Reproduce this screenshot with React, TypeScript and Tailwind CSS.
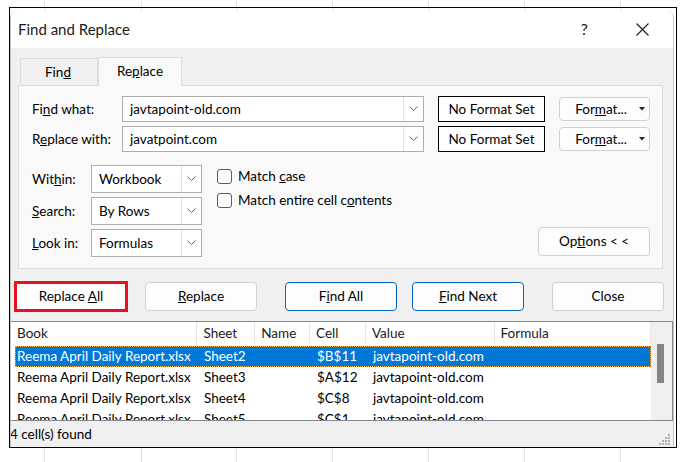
import React from 'react';

const font = { fontFamily: 'Lato, "Noto Sans", sans-serif' };

const Chevron: React.FC = () => (
  <svg width="9" height="6" viewBox="0 0 9 6" className="text-[#6b6b6b]">
    <path d="M0.5 0.5 L4.5 4.5 L8.5 0.5" fill="none" stroke="currentColor" strokeWidth="1" />
  </svg>
);

const Combo: React.FC<{ value: string; w: string; h: string }> = ({ value, w, h }) => (
  <div className={`${w} ${h} flex border border-[#adadad] bg-white`}>
    <div className="flex-1 flex items-center pl-[7px] text-black">{value}</div>
    <div className="w-[20px] flex items-center justify-center border-l border-[#e3e3e3]">
      <Chevron />
    </div>
  </div>
);

const Checkbox: React.FC<{ children: React.ReactNode }> = ({ children }) => (
  <div className="flex items-center gap-[6px] h-[15px]">
    <div className="w-[15px] h-[15px] rounded-[3px] border border-[#5c5c5c] bg-[#fbfbfb]" />
    <span className="text-black">{children}</span>
  </div>
);

const FormatButton: React.FC = () => (
  <div className="w-[91px] h-[24px] rounded-[4px] border border-[#d0d0d0] bg-[#fdfdfd] flex items-center justify-end pr-[4px] gap-[12px]">
    <span>
      For<u>m</u>at...
    </span>
    <svg width="6" height="4" viewBox="0 0 6 4">
      <path d="M0 0 L6 0 L3 3.5 Z" fill="#222" />
    </svg>
  </div>
);

const rows = [
  { book: 'Reema April Daily Report.xlsx', sheet: 'Sheet2', cell: '$B$11', value: 'javtapoint-old.com' },
  { book: 'Reema April Daily Report.xlsx', sheet: 'Sheet3', cell: '$A$12', value: 'javtapoint-old.com' },
  { book: 'Reema April Daily Report.xlsx', sheet: 'Sheet4', cell: '$C$8', value: 'javtapoint-old.com' },
  { book: 'Reema April Daily Report.xlsx', sheet: 'Sheet5', cell: '$C$1', value: 'javtapoint-old.com' },
];

const cols = ['w-[187px]', 'w-[58px]', 'w-[55px]', 'w-[56px]', 'w-[129px]', 'w-[157px]'];

export default function App() {
  return (
    <div className="w-[690px] h-[462px] bg-white relative overflow-hidden text-[13.5px]" style={font}>
      {/* faint spreadsheet grid behind */}
      <div className="absolute inset-0 flex pointer-events-none">
        <div className="w-[45px] border-r border-[#e2e2e2]" />
        <div className="w-[97px] border-r border-[#e2e2e2]" />
        <div className="w-[95px] border-r border-[#e2e2e2]" />
        <div className="w-[96px] border-r border-[#e2e2e2]" />
        <div className="w-[96px] border-r border-[#e2e2e2]" />
        <div className="w-[96px] border-r border-[#e2e2e2]" />
        <div className="w-[96px] border-r border-[#e2e2e2]" />
      </div>

      <div className="relative ml-[9px] mt-[7px] w-[668px] h-[441px] border border-black pt-[3px] flex flex-col">
        <div className="w-[664px] flex-1 flex flex-col rounded-t-[8px] overflow-hidden border-l border-r border-[#c8c8c8]">
          {/* title bar */}
          <div className="h-[37px] bg-white flex items-center pl-[7px] pr-[24px]">
            <span className="text-[15px] text-[#1a1a1a]">Find and Replace</span>
            <span className="ml-auto text-[16px] text-[#222] mr-[48px] mt-[-1px]">?</span>
            <svg width="13" height="13" viewBox="0 0 13 13">
              <path d="M0.5 0.5 L12.5 12.5 M12.5 0.5 L0.5 12.5" stroke="#222" strokeWidth="1.2" />
            </svg>
          </div>

          {/* body */}
          <div className="flex-1 bg-[#f0f0f0] flex flex-col">
            {/* tabs */}
            <div className="mt-[9px] pl-[9px] flex items-end h-[28px] relative z-10">
              <div className="w-[78px] h-[27px] border border-b-0 border-[#dcdcdc] bg-[#f0f0f0] flex items-center justify-center">
                <span className="ml-[-2px]">
                  Fin<u>d</u>
                </span>
              </div>
              <div className="w-[84px] h-[29px] -mb-px border border-b-0 border-[#dcdcdc] bg-[#f9f9f9] flex items-center justify-center">
                <span className="mt-[-2px]">
                  Re<u>p</u>lace
                </span>
              </div>
            </div>

            {/* tab panel */}
            <div className="ml-[7px] w-[645px] h-[184px] border border-[#dcdcdc] bg-[#f9f9f9] pt-[10px] pl-[13px] flex flex-col text-black">
              <div className="flex flex-col gap-[4px]">
                <div className="flex items-center">
                  <div className="w-[90px]">
                    Fi<u>n</u>d what:
                  </div>
                  <Combo value="javtapoint-old.com" w="w-[302px]" h="h-[26px]" />
                  <div className="ml-[14px] w-[107px] h-[26px] border border-black bg-white flex items-center justify-center">
                    No Format Set
                  </div>
                  <div className="ml-[14px]">
                    <FormatButton />
                  </div>
                </div>
                <div className="flex items-center">
                  <div className="w-[90px]">
                    R<u>e</u>place with:
                  </div>
                  <Combo value="javatpoint.com" w="w-[302px]" h="h-[26px]" />
                  <div className="ml-[14px] w-[107px] h-[26px] border border-black bg-white flex items-center justify-center">
                    No Format Set
                  </div>
                  <div className="ml-[14px]">
                    <FormatButton />
                  </div>
                </div>
              </div>

              <div className="mt-[13px] flex">
                <div className="flex flex-col gap-[4px]">
                  <div className="flex items-center">
                    <div className="w-[59px]">
                      Wit<u>h</u>in:
                    </div>
                    <Combo value="Workbook" w="w-[111px]" h="h-[28px]" />
                  </div>
                  <div className="flex items-center">
                    <div className="w-[59px]">
                      <u>S</u>earch:
                    </div>
                    <Combo value="By Rows" w="w-[111px]" h="h-[28px]" />
                  </div>
                  <div className="flex items-center">
                    <div className="w-[59px]">
                      <u>L</u>ook in:
                    </div>
                    <Combo value="Formulas" w="w-[111px]" h="h-[28px]" />
                  </div>
                </div>
                <div className="ml-[15px] pt-[4px] flex flex-col gap-[9px]">
                  <Checkbox>
                    Match <u>c</u>ase
                  </Checkbox>
                  <Checkbox>
                    Match entire cell c<u>o</u>ntents
                  </Checkbox>
                </div>
                <div className="ml-auto mr-[12px] self-end mb-[1px] w-[112px] h-[29px] rounded-[4px] border border-[#d0d0d0] bg-[#fdfdfd] flex items-center justify-center">
                  <span>
                    Op<u>t</u>ions &lt; &lt;
                  </span>
                </div>
              </div>
            </div>

            {/* action buttons */}
            <div className="mt-[12px] h-[30px] flex items-center text-black">
              <div className="ml-[3px] w-[114px] h-[31px] border-[3px] border-[#e81123] bg-white flex items-center justify-center">
                <span>
                  Replace <u>A</u>ll
                </span>
              </div>
              <div className="ml-[17px] w-[112px] h-[29px] rounded-[4px] border border-[#d0d0d0] bg-[#fdfdfd] flex items-center justify-center">
                <span>
                  <u>R</u>eplace
                </span>
              </div>
              <div className="ml-[28px] w-[112px] h-[29px] rounded-[4px] border border-[#0067c0] bg-[#fdfdfd] flex items-center justify-center">
                <span>
                  F<u>i</u>nd All
                </span>
              </div>
              <div className="ml-[15px] w-[112px] h-[29px] rounded-[4px] border border-[#0067c0] bg-[#fdfdfd] flex items-center justify-center">
                <span>
                  <u>F</u>ind Next
                </span>
              </div>
              <div className="ml-[28px] w-[112px] h-[29px] rounded-[4px] border border-[#d0d0d0] bg-[#fdfdfd] flex items-center justify-center">
                Close
              </div>
            </div>

            {/* results list */}
            <div className="mt-[10px] h-[100px] border-t border-b border-r border-[#828790] bg-white flex overflow-hidden">
              <div className="w-[642px] flex flex-col overflow-hidden">
                <div className="h-[24px] flex shrink-0">
                  {['Book', 'Sheet', 'Name', 'Cell', 'Value', 'Formula'].map((h, i) => (
                    <div key={h} className={`${cols[i]} pl-[6px] pb-[2px] flex items-center text-[#1a1a1a] border-r border-[#e5e5e5]`}>
                      {h}
                    </div>
                  ))}
                </div>
                <div className="pl-[4px] flex flex-col">
                  {rows.map((r, idx) => (
                    <div
                      key={idx}
                      className={`h-[21px] shrink-0 flex items-center ${
                        idx === 0 ? 'bg-[#0078d7] text-white outline-1 outline-dotted outline-[#f7b34a] -outline-offset-1' : 'text-black'
                      }`}
                    >
                      <div className="w-[183px] pl-[2px] whitespace-nowrap">{r.book}</div>
                      <div className="w-[58px] pl-[6px]">{r.sheet}</div>
                      <div className="w-[55px]" />
                      <div className="w-[56px] pl-[6px]">{r.cell}</div>
                      <div className="w-[129px] pl-[6px]">{r.value}</div>
                      <div className="w-[153px]" />
                    </div>
                  ))}
                </div>
              </div>
              <div className="w-[21px] bg-[#f0f0f0] relative">
                <div className="absolute left-[6px] top-[22px] w-[7px] h-[39px] bg-[#858585]" />
              </div>
            </div>

            {/* status bar */}
            <div className="flex-1 flex items-center relative text-black">
              <span className="ml-[-1px]">4 cell(s) found</span>
              <svg className="absolute right-[2px] bottom-[2px]" width="12" height="12" viewBox="0 0 12 12">
                <rect x="9" y="1" width="2" height="2" fill="#b0b0b0" />
                <rect x="6" y="4" width="2" height="2" fill="#b0b0b0" />
                <rect x="9" y="4" width="2" height="2" fill="#b0b0b0" />
                <rect x="3" y="7" width="2" height="2" fill="#b0b0b0" />
                <rect x="6" y="7" width="2" height="2" fill="#b0b0b0" />
                <rect x="9" y="7" width="2" height="2" fill="#b0b0b0" />
                <rect x="0" y="10" width="2" height="2" fill="#b0b0b0" />
                <rect x="3" y="10" width="2" height="2" fill="#b0b0b0" />
                <rect x="6" y="10" width="2" height="2" fill="#b0b0b0" />
                <rect x="9" y="10" width="2" height="2" fill="#b0b0b0" />
              </svg>
            </div>
          </div>
        </div>
      </div>
    </div>
  );
}
